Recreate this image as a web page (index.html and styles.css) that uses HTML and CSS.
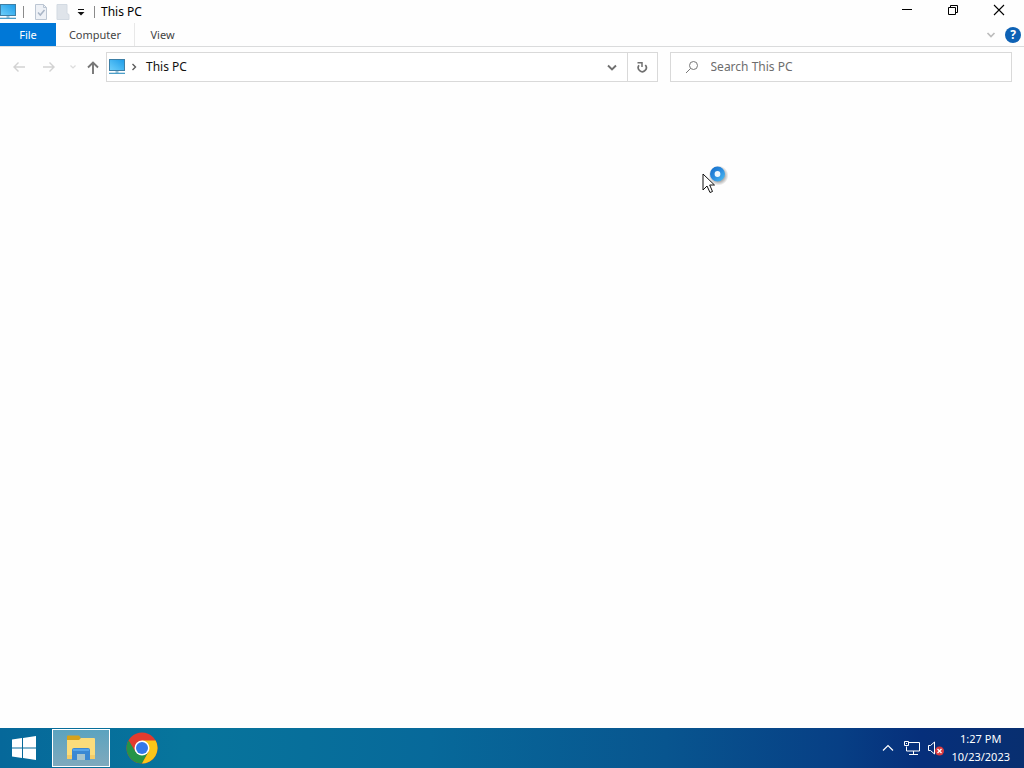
FILE: index.html
```html
<!DOCTYPE html>
<html lang="en">
<head>
    <meta charset="UTF-8">
    <meta name="viewport" content="width=device-width, initial-scale=1.0">
    <title>This PC</title>
    <link rel="stylesheet" href="styles.css">
</head>
<body>
    <!-- shared monitor icon -->
    <svg class="defs" aria-hidden="true">
        <defs>
            <linearGradient id="screen" x1="0" y1="1" x2="1" y2="0">
                <stop offset="0" stop-color="#6fd0fb"/>
                <stop offset="1" stop-color="#1c9be8"/>
            </linearGradient>
            <symbol id="pc" viewBox="0 0 16 16">
                <rect x="0.5" y="0.5" width="15" height="11" fill="url(#screen)" stroke="#3d7fa6"/>
                <path d="M6.5 12h3v2h-3z" fill="#9dc3d8"/>
                <path d="M0 13.700h16v1.300H0z" fill="#4d9fc9"/>
            </symbol>
        </defs>
    </svg>

    <div class="window">
        <header class="title-bar">
            <svg class="app-icon" width="16" height="16"><use href="#pc"/></svg>
            <span class="divider"></span>
            <button class="quick-btn" aria-label="Properties">
                <svg width="14" height="16" viewBox="0 0 14 16">
                    <path d="M1.5.5h8l3 3v12h-11z" fill="#eef1f6" stroke="#bcc6d3"/>
                    <path d="M9.500.5v3h3" fill="none" stroke="#bcc6d3"/>
                    <path d="M4 8.500l2.300 2.500L10.500 6" fill="none" stroke="#a9b5c6" stroke-width="1.500"/>
                </svg>
            </button>
            <button class="quick-btn" aria-label="New folder">
                <svg width="14" height="16" viewBox="0 0 14 16">
                    <path d="M1 .5h10v9l2 1v5H1z" fill="#dfe4ea" stroke="#d3dae2"/>
                </svg>
            </button>
            <button class="quick-menu" aria-label="Customize Quick Access Toolbar">
                <svg width="8" height="8" viewBox="0 0 8 8">
                    <path d="M1 1.500h6" stroke="#111"/>
                    <path d="M.5 4h7L4 7.500z" fill="#111"/>
                </svg>
            </button>
            <span class="divider"></span>
            <h1>This PC</h1>
            <div class="window-controls">
                <button aria-label="Minimize">
                    <svg width="12" height="12" viewBox="0 0 12 12"><path d="M1 5.500h10" stroke="#000"/></svg>
                </button>
                <button aria-label="Restore">
                    <svg width="12" height="12" viewBox="0 0 12 12">
                        <path d="M1.500 3.500h7v7h-7zM3.500 3.500v-2h7v7h-2" fill="none" stroke="#000"/>
                    </svg>
                </button>
                <button aria-label="Close">
                    <svg width="12" height="12" viewBox="0 0 12 12"><path d="M1 1l10 10M11 1L1 11" stroke="#000" stroke-width="1.100"/></svg>
                </button>
            </div>
        </header>

        <nav class="ribbon">
            <button class="tab tab-file">File</button>
            <button class="tab tab-computer">Computer</button>
            <button class="tab tab-view">View</button>
            <div class="ribbon-end">
                <button aria-label="Expand the Ribbon">
                    <svg width="10" height="10" viewBox="0 0 10 10"><path d="M1.500 3L5 6.500 8.500 3" fill="none" stroke="#bdbdbd" stroke-width="1.700"/></svg>
                </button>
                <button class="help" aria-label="Help">?</button>
            </div>
        </nav>

        <div class="address-row">
            <div class="nav-buttons">
                <button aria-label="Back">
                    <svg width="14" height="14" viewBox="0 0 14 14"><path d="M13 7H2M6.500 2.500L2 7l4.500 4.500" fill="none" stroke="#d2d2d2" stroke-width="1.400"/></svg>
                </button>
                <button aria-label="Forward">
                    <svg width="14" height="14" viewBox="0 0 14 14"><path d="M1 7h11M7.500 2.500L12 7l-4.500 4.500" fill="none" stroke="#d2d2d2" stroke-width="1.400"/></svg>
                </button>
                <button class="recent" aria-label="Recent locations">
                    <svg width="8" height="8" viewBox="0 0 8 8"><path d="M1.500 2.500L4 5l2.500-2.500" fill="none" stroke="#dcdcdc" stroke-width="1.200"/></svg>
                </button>
                <button class="up" aria-label="Up">
                    <svg width="14" height="14" viewBox="0 0 14 14"><path d="M7 14V2.500M2 7.500l5-5 5 5" fill="none" stroke="#777" stroke-width="1.900"/></svg>
                </button>
            </div>
            <div class="address-box">
                <svg class="place-icon" width="16" height="16"><use href="#pc"/></svg>
                <svg class="crumb-arrow" width="8" height="8" viewBox="0 0 8 8"><path d="M2.500 1L5.500 4l-3 3" fill="none" stroke="#5c5c5c" stroke-width="1.400"/></svg>
                <a class="crumb" href="#">This PC</a>
                <button class="previous" aria-label="Previous locations">
                    <svg width="10" height="10" viewBox="0 0 10 10"><path d="M1 3.500l4 4 4-4" fill="none" stroke="#707070" stroke-width="1.900"/></svg>
                </button>
                <button class="refresh" aria-label="Refresh">
                    <svg width="12" height="12" viewBox="0 0 12 12">
                        <path d="M9.300 4A4 4 0 1 1 3 4.300" fill="none" stroke="#707070" stroke-width="1.700"/>
                        <path d="M1.500 1.800h4.500v4.200" fill="none" stroke="#707070" stroke-width="1.500"/>
                    </svg>
                </button>
            </div>
            <label class="search-box">
                <svg class="search-icon" width="14" height="14" viewBox="0 0 14 14">
                    <circle cx="8.500" cy="5.500" r="4" fill="none" stroke="#777"/>
                    <path d="M5.500 8.500L1 13" stroke="#777"/>
                </svg>
                <input type="text" placeholder="Search This PC" aria-label="Search This PC">
            </label>
        </div>

        <main class="content">
            <svg class="cursor" width="28" height="30" viewBox="0 0 28 30">
                <defs>
                    <radialGradient id="halo">
                        <stop offset="0.6" stop-color="#777" stop-opacity="0.6"/>
                        <stop offset="1" stop-color="#777" stop-opacity="0"/>
                    </radialGradient>
                    <linearGradient id="ring" x1="0" y1="0" x2="1" y2="1">
                        <stop offset="0" stop-color="#1b76cf"/>
                        <stop offset="0.500" stop-color="#2b8de0"/>
                        <stop offset="1" stop-color="#45b2ee"/>
                    </linearGradient>
                </defs>
                <circle cx="16.500" cy="10.500" r="10" fill="url(#halo)"/>
                <circle cx="15.500" cy="9" r="5.200" fill="#eef8ff" stroke="url(#ring)" stroke-width="4.600"/>
                <path d="M1 9v16l4-4 3 6.500 2.500-1L7.700 20H12.500z" fill="#fff" stroke="#111"/>
            </svg>
        </main>
    </div>

    <footer class="taskbar">
        <button class="start" aria-label="Start">
            <svg width="24" height="24" viewBox="0 0 24 24">
                <path d="M0 3.400L10 2v9.500H0zM11 1.900L24 0v11.500H11zM0 12.500h10V22L0 20.600zM11 12.500h13V24l-13-1.900z" fill="#fff"/>
            </svg>
        </button>
        <button class="task active" aria-label="File Explorer">
            <svg width="30" height="26" viewBox="0 0 30 26">
                <path d="M1 1.500a1 1 0 0 1 1-1h11l1.500 2V6H1z" fill="#d6a21b"/>
                <path d="M1 5h12l2-2h13a1 1 0 0 1 1 1v20H1z" fill="#fbdc7b"/>
                <path d="M1 20h28v4H1z" fill="#f3cc68"/>
                <path d="M6 25V15a2 2 0 0 1 2-2h14a2 2 0 0 1 2 2v10h-5v-6h-8v6z" fill="#3b88d3"/>
                <path d="M7 14h16v2H7z" fill="#56a4ea"/>
                <path d="M11 19h8v6h-8z" fill="#a7c4cd"/>
            </svg>
        </button>
        <button class="task" aria-label="Google Chrome">
            <svg width="32" height="32" viewBox="0 0 32 32">
                <circle cx="16" cy="16" r="15.500" fill="#e33b2e"/>
                <path d="M2.580 8.250A15.500 15.500 0 0 0 16 31.500L22.500 19.750L9.500 19.750z" fill="#259447"/>
                <path d="M16 8.500H29.600A15.500 15.500 0 0 1 16 31.500L22.500 19.750z" fill="#fbc619"/>
                <circle cx="16" cy="16" r="7.500" fill="#fff"/>
                <circle cx="16" cy="16" r="6" fill="#3478ea"/>
            </svg>
        </button>
        <div class="tray">
            <button aria-label="Show hidden icons">
                <svg width="12" height="12" viewBox="0 0 12 12"><path d="M1 8.500l5-5 5 5" fill="none" stroke="#fff" stroke-width="1.200"/></svg>
            </button>
            <button aria-label="Network">
                <svg width="18" height="16" viewBox="0 0 18 16">
                    <path d="M6 2.500h10.500v8.500H3.500V6.500M10.500 11v3M6 14.500h9" fill="none" stroke="#fff"/>
                    <path d="M1.500 1.500h4v4h-4z" fill="none" stroke="#fff"/>
                    <path d="M3 3h1v1H3z" fill="#fff"/>
                </svg>
            </button>
            <button aria-label="Volume muted">
                <svg width="18" height="16" viewBox="0 0 18 16">
                    <path d="M1.500 5.500h2l4-3.500v12l-4-3.500h-2z" fill="none" stroke="#fff"/>
                    <circle cx="12.500" cy="11" r="4.500" fill="#d93a3f"/>
                    <path d="M10.500 9l4 4M14.500 9l-4 4" stroke="#fff" stroke-width="1.300"/>
                </svg>
            </button>
            <button class="clock">
                <span>1:27 PM</span>
                <span>10/23/2023</span>
            </button>
        </div>
    </footer>
</body>
</html>
```
FILE: styles.css
```css
* {
    margin: 0;
    padding: 0;
    box-sizing: border-box;
}

body {
    display: flex;
    flex-direction: column;
    min-height: 100vh;
    font-family: "Segoe UI", "Noto Sans", "Open Sans", sans-serif;
    font-size: 11px;
    line-height: 16px;
    color: #222;
    background: #fefefe;
}

button {
    display: flex;
    align-items: center;
    justify-content: center;
    border: none;
    background: none;
    font: inherit;
    color: inherit;
}

svg {
    display: block;
    flex-shrink: 0;
}

.defs {
    position: absolute;
    width: 0;
    height: 0;
}

.window {
    flex: 1;
    display: flex;
    flex-direction: column;
}

/* Title bar */
.title-bar {
    display: flex;
    align-items: center;
    height: 23px;
}

.app-icon {
    margin-right: 1px;
}

.divider {
    width: 1px;
    height: 12px;
    margin: 0 6px;
    background: #8a8a8a;
}

.quick-btn {
    width: 22px;
}

.quick-menu {
    width: 14px;
    height: 16px;
}

.title-bar h1 {
    font-size: 12px;
    font-weight: normal;
    color: #000;
}

.window-controls {
    display: flex;
    align-self: flex-start;
    margin-left: auto;
    padding-right: 2px;
}

.window-controls button {
    width: 46px;
    height: 20px;
}

/* Ribbon tabs */
.ribbon {
    display: flex;
    height: 24px;
    border-bottom: 1px solid #dadbdc;
}

.tab {
    color: #444;
}

.tab-file {
    width: 56px;
    background: #0078d7;
    color: #fff;
}

.tab-computer {
    width: 79px;
    border-right: 1px solid #e8e8e8;
}

.tab-view {
    width: 55px;
}

.ribbon-end {
    display: flex;
    align-items: center;
    gap: 9px;
    margin-left: auto;
    padding-right: 3px;
}

.help {
    width: 16px;
    height: 16px;
    border-radius: 50%;
    background: #0e62b5;
    color: #fff;
    font-size: 12px;
    font-weight: bold;
}

/* Address bar */
.address-row {
    display: flex;
    align-items: center;
    height: 40px;
    padding-right: 12px;
}

.nav-buttons {
    display: flex;
    align-items: center;
    width: 106px;
    padding-left: 4px;
}

.nav-buttons button {
    width: 30px;
    height: 24px;
}

.nav-buttons .recent {
    width: 18px;
}

.nav-buttons .up {
    width: 22px;
}

.address-box,
.search-box {
    display: flex;
    align-items: center;
    height: 30px;
    border: 1px solid #d9d9d9;
    background: #fff;
}

.address-box {
    flex: 552;
    margin-right: 12px;
}

.search-box {
    flex: 342;
}

.place-icon {
    margin-left: 2px;
}

.crumb-arrow {
    margin: 0 8px 0 5px;
}

.crumb {
    font-size: 12px;
    color: #111;
    text-decoration: none;
}

.previous {
    width: 30px;
    height: 28px;
    margin-left: auto;
}

.refresh {
    width: 30px;
    height: 28px;
    border-left: 1px solid #d9d9d9;
}

.search-icon {
    margin: 0 12px 0 14px;
}

.search-box input {
    flex: 1;
    min-width: 0;
    border: none;
    outline: none;
    background: none;
    font: inherit;
    font-size: 12px;
}

.search-box input::placeholder {
    color: #6d6d6d;
    opacity: 1;
}

.content {
    position: relative;
    flex: 1;
}

.cursor {
    position: absolute;
    left: 702px;
    top: 78px;
}

/* Taskbar */
.taskbar {
    display: flex;
    align-items: center;
    height: 40px;
    color: #fff;
    background: linear-gradient(90deg, #06689a 0%, #07759c 18%, #07699a 42%, #08558f 65%, #073f85 82%, #062f7b 90%, #082f70 100%);
}

.start {
    width: 48px;
    height: 40px;
    margin-right: 4px;
}

.task {
    width: 58px;
    height: 38px;
    margin-right: 3px;
}

.task.active {
    border: 1px solid #fff;
    background: linear-gradient(#5ba3bf, #7fa9bd);
}

.tray {
    display: flex;
    align-items: center;
    gap: 6px;
    margin-left: auto;
    padding-right: 14px;
}

.tray button:first-child {
    width: 18px;
}

.clock {
    flex-direction: column;
    line-height: 18px;
}
```
